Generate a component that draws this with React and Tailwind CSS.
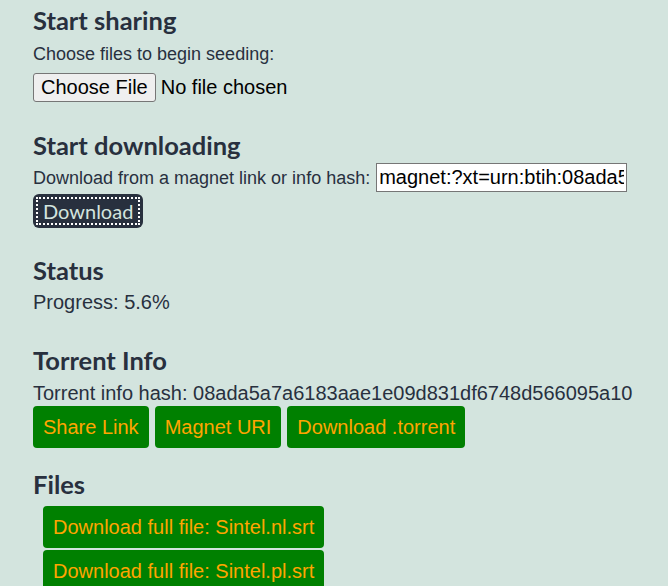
import React, { useState } from 'react'

const torrentHash = '08ada5a7a6183aae1e09d831df6748d566095a10'

const files = ['Sintel.nl.srt', 'Sintel.pl.srt', 'Sintel.pt.srt']

function Heading({ children, className = '' }) {
  return (
    <h2
      className={`font-['Lato','Liberation_Sans',sans-serif] text-[25.5px] font-bold leading-[26px] text-[#28303e] ${className}`}
    >
      {children}
    </h2>
  )
}

function GreenButton({ children }) {
  return (
    <button className="rounded bg-[#008000] px-[10px] py-[9px] text-[20px] leading-[24px] text-[#ffa500]">
      {children}
    </button>
  )
}

export default function App() {
  const [magnet, setMagnet] = useState(`magnet:?xt=urn:btih:${torrentHash}&dn=Sintel`)

  return (
    <div className="min-h-[586px] bg-[#d3e4de] pl-[33px] pt-[7px] font-['Liberation_Sans',Arial,sans-serif] text-[#28303e]">
      {/* sharing */}
      <Heading>Start sharing</Heading>
      <p className="mt-[11px] text-[18px] leading-[20px]">Choose files to begin seeding:</p>
      <div className="mt-[9px] flex items-center gap-[5px] text-[20px] leading-[23px] text-black">
        <button className="rounded-[3px] border border-[#767676] bg-[#efefef] px-[7px] py-[2px]">
          Choose File
        </button>
        <span>No file chosen</span>
      </div>

      {/* downloading */}
      <Heading className="mt-[30px]">Start downloading</Heading>
      <div className="mt-[5px] flex items-baseline gap-[6px]">
        <span className="text-[18px] leading-[20px]">Download from a magnet link or info hash:</span>
        <input
          value={magnet}
          onChange={(e) => setMagnet(e.target.value)}
          className="h-[29px] w-[251px] border border-[#767676] bg-white px-[2px] py-[2px] text-[20px] leading-[23px] text-black"
        />
      </div>
      <div className="mt-[2px]">
        <button className="rounded-md bg-[#28303e] p-[3px] font-['Lato','Liberation_Sans',sans-serif] text-[20px] leading-[24px] text-[#d3e4de]">
          <span className="block border-2 border-dotted border-white px-[5px]">Download</span>
        </button>
      </div>

      {/* status */}
      <Heading className="mt-[29px]">Status</Heading>
      <p className="mt-[9px] text-[20px] leading-[20px]">Progress: 5.6%</p>

      {/* torrent info */}
      <Heading className="mt-[35px]">Torrent Info</Heading>
      <p className="mt-[10px] text-[20px] leading-[20px]">Torrent info hash: {torrentHash}</p>
      <div className="mt-[3px] flex gap-[6px]">
        <GreenButton>Share Link</GreenButton>
        <GreenButton>Magnet URI</GreenButton>
        <GreenButton>Download .torrent</GreenButton>
      </div>

      {/* files */}
      <Heading className="mt-[23px]">Files</Heading>
      <ul className="mt-[9px] flex flex-col items-start gap-[2px] pl-[10px]">
        {files.map((name) => (
          <li key={name}>
            <GreenButton>Download full file: {name}</GreenButton>
          </li>
        ))}
      </ul>
    </div>
  )
}
